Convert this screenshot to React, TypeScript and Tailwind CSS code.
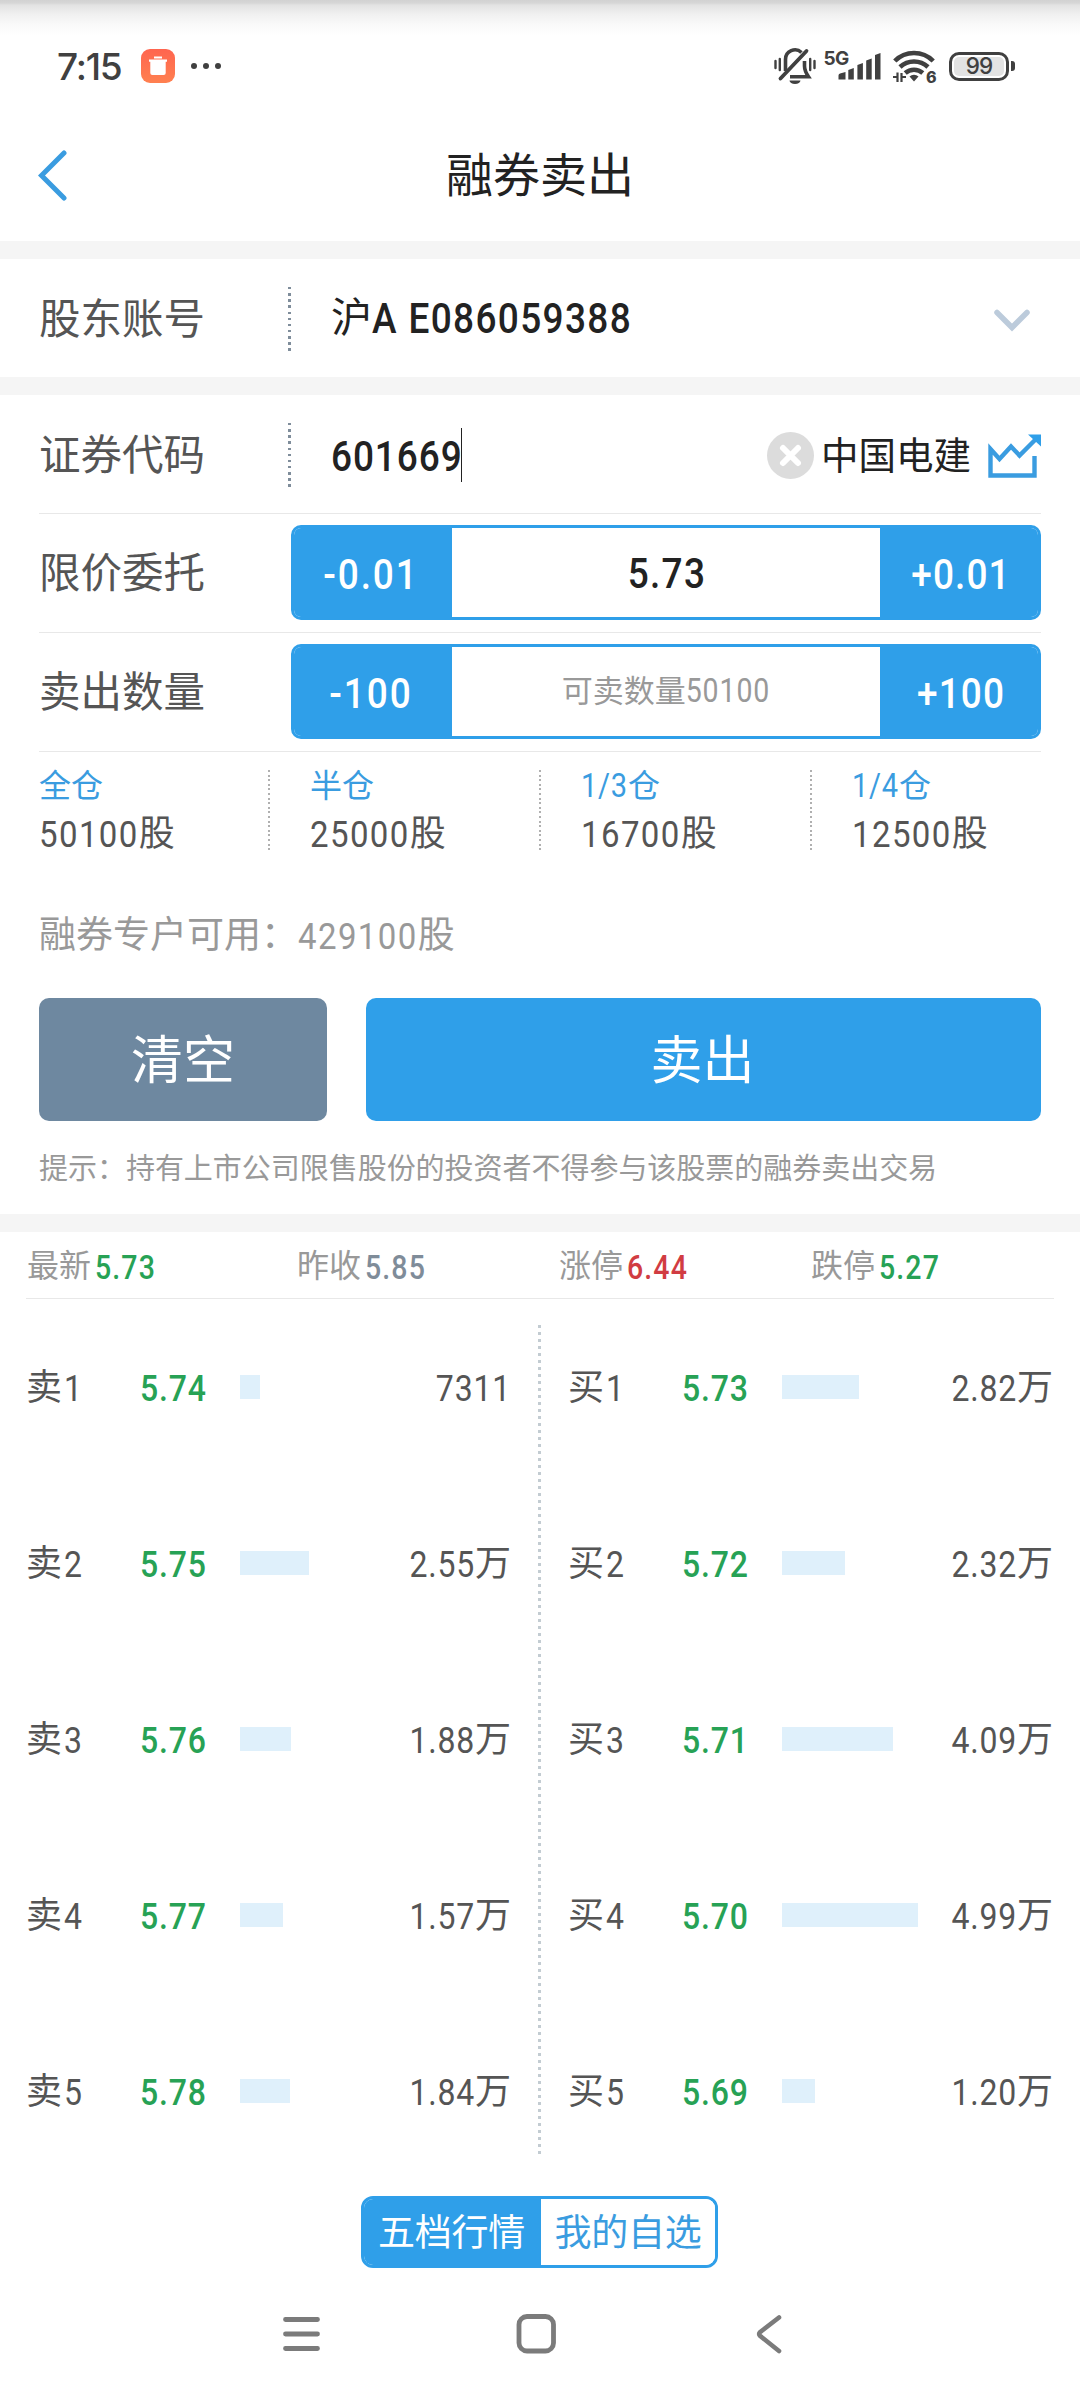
import type { ReactNode } from 'react'
import clsx from 'clsx'

interface Quote {
  label: string
  index: number
  price: string
  volume: number
}

const asks: Quote[] = [
  { label: '卖', index: 1, price: '5.74', volume: 7311 },
  { label: '卖', index: 2, price: '5.75', volume: 25500 },
  { label: '卖', index: 3, price: '5.76', volume: 18800 },
  { label: '卖', index: 4, price: '5.77', volume: 15700 },
  { label: '卖', index: 5, price: '5.78', volume: 18400 },
]

const bids: Quote[] = [
  { label: '买', index: 1, price: '5.73', volume: 28200 },
  { label: '买', index: 2, price: '5.72', volume: 23200 },
  { label: '买', index: 3, price: '5.71', volume: 40900 },
  { label: '买', index: 4, price: '5.70', volume: 49900 },
  { label: '买', index: 5, price: '5.69', volume: 12000 },
]

const positions = [
  { part: '全', amount: '50100' },
  { part: '半', amount: '25000' },
  { part: '1/3', amount: '16700' },
  { part: '1/4', amount: '12500' },
]

const stats = [
  { label: '最新', value: '5.73', width: 'w-[270px]', color: 'text-[#27a255]' },
  { label: '昨收', value: '5.85', width: 'w-[262px]', color: 'text-[#7f8c99]' },
  { label: '涨停', value: '6.44', width: 'w-[252px]', color: 'text-[#d13c42]' },
  { label: '跌停', value: '5.27', width: 'w-[200px]', color: 'text-[#27a255]' },
]

const MAX_VOLUME = 49900

// Tall, narrow figures
const Num = ({ className, children }: { className: string; children: ReactNode }) => (
  <span className={clsx('inline-block -translate-y-px scale-y-[1.14] leading-none whitespace-pre', className)}>
    {children}
  </span>
)

const Volume = ({ value }: { value: number }) => (
  <span className="ml-auto">
    <Num className="text-[32px] tracking-[0.8px]">{value >= 10000 ? (value / 10000).toFixed(2) : value}</Num>
    {value >= 10000 && '万'}
  </span>
)

const StatusBar = () => (
  <div className="flex h-[132px] items-center justify-between bg-[linear-gradient(#d2d2d2_0px,#d6d6d6_3px,#e2e2e2_5px,#f0f0f0_14px,#fafafa_25px,#ffffff_35px)] pr-[65px] pl-[57px] text-[#404040]">
    <div className="flex items-center">
      <span className="w-[84px] font-['Inter'] text-[37px] leading-none font-medium tracking-[-1.2px]">7:15</span>
      <svg width="34" height="34" viewBox="0 0 34 34">
        <defs>
          <linearGradient id="trash" x1="0" y1="0" x2="0" y2="1">
            <stop offset="0" stopColor="#ff654f" />
            <stop offset="1" stopColor="#ff8050" />
          </linearGradient>
        </defs>
        <rect width="34" height="34" rx="9" fill="url(#trash)" />
        <path d="M13 7.500h8v2h-8zM8 10.500h18v2.200h-1.300V24a2 2 0 0 1-2 2H11.300a2 2 0 0 1-2-2V12.700H8z" fill="#fff" />
      </svg>
      <svg className="ml-4" width="30" height="6" viewBox="0 0 30 6" fill="currentColor">
        <circle cx="3" cy="3" r="3" />
        <circle cx="15" cy="3" r="3" />
        <circle cx="27" cy="3" r="3" />
      </svg>
    </div>
    <div className="flex items-center">
      {/* muted bell */}
      <svg width="42" height="38" viewBox="0 0 42 38" fill="none" stroke="currentColor">
        <path d="M1.500 14v7M5.800 12v11M40.500 14v7M36.200 12v11" strokeWidth="2.400" strokeLinecap="round" />
        <path d="M11.500 24V12.500a9.500 9.500 0 0 1 16-7M30.500 14v5c0 4 1.500 7 4 10.800H16" strokeWidth="3.600" />
        <path d="M32.500 4L6.500 31.500" strokeWidth="3.800" strokeLinecap="round" />
        <path d="M15.500 33.500h11a5.500 3.500 0 0 1-11 0z" fill="currentColor" stroke="none" />
      </svg>
      {/* signal */}
      <svg className="ml-1 overflow-visible" width="62" height="38" viewBox="-4 0 62 38" fill="currentColor">
        <text x="-0.500" y="17.500" fontFamily="Inter" fontSize="19" fontWeight="700" letterSpacing="-0.600">5G</text>
        <path d="M14.500 28.500q0-1.500 1.500-2l5.500-1.500v7.500h-7zM24.300 23l5.500-2v11.500h-5.500zM33.400 18l5.500-2v16.500h-5.500zM42.200 13.500l5.500-2v21h-5.500zM51 8l5.500-2v26.500H51z" />
      </svg>
      {/* wifi */}
      <svg className="ml-[10px]" width="45" height="38" viewBox="0 0 45 38" fill="none" stroke="currentColor" strokeWidth="4.600">
        <path d="M2.800 14a27 27 0 0 1 38.400 0" />
        <path d="M8 20a20.500 20.500 0 0 1 28 0" />
        <path d="M13.200 26a13.500 13.500 0 0 1 17.600 0" />
        <path d="M17.500 29.500a6.500 6.500 0 0 1 9 0L22 34.500z" fill="currentColor" stroke="none" />
        <path d="M1 30h4.500V35M5.500 25.500V35M9.500 26v9M9.500 30h4.500" strokeWidth="2.200" />
        <text x="34" y="35.500" fontFamily="Inter" fontSize="16" fontWeight="800" fill="currentColor" stroke="none">6</text>
      </svg>
      {/* battery */}
      <div className="ml-[12px] flex items-center gap-0.5">
        <div className="flex h-[29px] w-[60px] rounded-[10px] border-3 border-[#404040] p-[2px]">
          <div className="flex flex-1 items-center justify-center rounded-[5px] bg-[#e3e3e3] font-['Inter'] text-[22.5px] leading-none font-medium tracking-[-0.8px]">
            99
          </div>
        </div>
        <div className="h-2.5 w-[4px] rounded-r-[3px] bg-[#404040]" />
      </div>
    </div>
  </div>
)

const Header = () => (
  <header className="flex h-[109px] items-center pb-[23px]">
    <div className="w-1/3 pl-[38px]">
      <svg width="30" height="52" viewBox="0 0 30 52" fill="none" stroke="#3a9ce0" strokeWidth="5" strokeLinecap="round">
        <path d="M26 4L3.500 26.500L26 49" />
      </svg>
    </div>
    <h1 className="w-1/3 pt-px text-center text-[47px] leading-none text-[#222]">融券卖出</h1>
  </header>
)

const Band = () => <div className="h-[18px] bg-[#f5f5f5]" />

const DottedDivider = () => (
  <div className="mt-0.5 h-[64px] w-[3px] bg-[repeating-linear-gradient(#7f8d9b_0px,#7f8d9b_2.400px,transparent_2.400px,transparent_6.150px)]" />
)

const Label = ({ children }: { children: ReactNode }) => (
  <div className="w-[249px] shrink-0 pt-[3px] text-[41.5px] leading-none text-[#555]">{children}</div>
)

interface StepperProps {
  step: string
  children: ReactNode
}

const Stepper = ({ step, children }: StepperProps) => (
  <div className="ml-[3px] flex h-[95px] w-[750px] overflow-hidden rounded-[10px] border-[3px] border-[#2f9fe9] bg-white">
    <button className="w-[158px] bg-[#2f9fe9] pt-[6px] pr-1 text-white">
      <Num className="text-[37px] font-medium tracking-[1.9px]">-{step}</Num>
    </button>
    <div className="flex flex-1 items-center justify-center">{children}</div>
    <button className="w-[158px] bg-[#2f9fe9] pt-[6px] pl-1 text-white">
      <Num className="text-[37px] font-medium tracking-[1.1px]">+{step}</Num>
    </button>
  </div>
)

const OrderForm = () => (
  <section className="h-[819px] px-[39px]">
    <div className="flex h-[119px] items-center border-b border-[#e8e8e8]">
      <Label>证券代码</Label>
      <DottedDivider />
      <div className="ml-[40px] flex flex-1 items-center pt-[2px]">
        <Num className="pt-[5px] text-[37px] font-medium tracking-[0.9px] text-[#222]">601669</Num>
        <span className="-ml-0.5 h-[54px] w-px bg-[#222]" />
      </div>
      <svg className="mt-[3px]" width="47" height="47" viewBox="0 0 47 47">
        <circle cx="23.500" cy="23.500" r="23.500" fill="#dcdcdc" />
        <path d="M16 16L31 31M31 16L16 31" stroke="#fff" strokeWidth="6" strokeLinecap="round" />
      </svg>
      <span className="w-[174px] pt-[5px] pl-[7px] text-[37.5px] leading-none text-[#222]">中国电建</span>
      <svg className="mt-[3px]" width="53" height="46" viewBox="0 0 53 46" fill="none">
        <path d="M46.500 23v19.500H2.500V16l9 10L23 13.500L31.500 22.500L47 7" stroke="#3a9ce0" strokeWidth="4.400" />
        <path d="M40 1.500h13v12z" fill="#2f9fe9" />
      </svg>
    </div>

    <div className="flex h-[119px] items-center border-b border-[#e8e8e8] pb-px">
      <Label>限价委托</Label>
      <Stepper step="0.01">
        <Num className="pt-[3px] pl-0.5 text-[37px] font-medium tracking-[1.3px] text-[#222]">5.73</Num>
      </Stepper>
    </div>
    <div className="flex h-[119px] items-center border-b border-[#e8e8e8] pb-px">
      <Label>卖出数量</Label>
      <Stepper step="100">
        <span className="pt-px text-[31px] leading-none text-[#999]">
          可卖数量<Num className="text-[28.5px] tracking-[0.9px]">50100</Num>
        </span>
      </Stepper>
    </div>

    <div className="flex h-[118px] pt-[18px]">
      {positions.map((position, index) => (
        <div key={position.part} className="flex h-[80px] w-[271px] shrink-0 justify-between">
          <div className="flex flex-col gap-[14px]">
            <span className="h-[32px] text-[32px] leading-none text-[#3a9ce0]">
              {position.part.length > 1 ? <Num className="text-[29px] tracking-[0.8px]">{position.part}</Num> : position.part}仓
            </span>
            <span className="h-[36px] text-[36px] leading-none text-[#555]">
              <Num className="text-[33px] tracking-[1.4px]">{position.amount}</Num>股
            </span>
          </div>
          {index < 3 && (
            <div className="mr-[40px] w-[2px] bg-[repeating-linear-gradient(#b0b0b0_0px,#b0b0b0_2px,transparent_2px,transparent_4.600px)]" />
          )}
        </div>
      ))}
    </div>

    <p className="h-[128px] pt-[47px] text-[37px] leading-none text-[#999]">
      融券专户可用：<Num className="text-[33px] tracking-[1.4px]">429100</Num>股
    </p>

    <div className="flex h-[123px] gap-[39px]">
      <button className="w-[288px] rounded-[10px] bg-[#6e88a0] pt-[5px] text-[52px] leading-none text-white">清空</button>
      <button className="flex-1 rounded-[10px] bg-[#2f9fe9] pt-[5px] pr-0.5 text-[52px] leading-none text-white">卖出</button>
    </div>
    <p className="pt-[34px] text-[29px] leading-none tracking-[-0.030px] whitespace-nowrap text-[#999]">
      提示：持有上市公司限售股份的投资者不得参与该股票的融券卖出交易
    </p>
  </section>
)

const QuoteList = ({ quotes }: { quotes: Quote[] }) => (
  <div className="w-[485px]">
    {quotes.map((quote) => (
      <div key={quote.index} className="flex h-[176px] items-center text-[36px] leading-none text-[#555]">
        <span className="w-[114px]">
          {quote.label}
          <Num className="pl-0.5 text-[32px]">{quote.index}</Num>
        </span>
        <Num className="w-[100px] pt-px text-[32px] font-medium tracking-[0.8px] text-[#27a255]">{quote.price}</Num>
        <div className="-mt-0.5 h-[24px] bg-[#dff0fb]" style={{ width: (quote.volume / MAX_VOLUME) * 136 }} />
        <Volume value={quote.volume} />
      </div>
    ))}
  </div>
)

const Market = () => (
  <section className="h-[964px] px-[26px]">
    <div className="flex h-[67px] items-center border-b border-[#e8e8e8] pl-px">
      {stats.map((stat) => (
        <div key={stat.label} className={clsx('flex items-center gap-1 text-[32px] leading-none', stat.width)}>
          <span className="pt-px text-[#999]">{stat.label}</span>
          <Num className={clsx('pt-[8px] text-[28.5px] font-medium tracking-[1.1px]', stat.color)}>{stat.value}</Num>
        </div>
      ))}
    </div>
    <div className="flex gap-[27px] pt-px">
      <QuoteList quotes={asks} />
      <div className="mt-[25px] h-[829px] w-[3px] bg-[repeating-linear-gradient(#c3ccd2_0px,#c3ccd2_3px,transparent_3px,transparent_7px)]" />
      <QuoteList quotes={bids} />
    </div>
  </section>
)

const Tabs = () => (
  <div className="ml-[361px] flex h-[72px] w-[357px] overflow-hidden rounded-[12px] border-[3px] border-[#2f9fe9] text-[37px] leading-none">
    <button className="w-[177px] bg-[#2f9fe9] pt-[2px] pr-0.5 tracking-[-0.2px] text-white">五档行情</button>
    <button className="flex-1 bg-white pt-[2px] tracking-[-0.2px] text-[#3a9ce0]">我的自选</button>
  </div>
)

const NavBar = () => (
  <nav className="flex h-[132px] pt-[45px] pl-[282px]">
    <svg width="38" height="42" viewBox="0 0 38 42" fill="none" stroke="#7b7b7b" strokeWidth="4.800" strokeLinecap="round">
      <path d="M3.500 6.500h32M3.500 21h32M3.500 35.500h32" />
    </svg>
    <svg className="ml-[196px]" width="40" height="42" viewBox="0 0 40 42" fill="none" stroke="#7b7b7b" strokeWidth="4.800">
      <rect x="3" y="3.500" width="34.500" height="34.500" rx="8" />
    </svg>
    <svg className="ml-[199px]" width="28" height="42" viewBox="0 0 28 42" fill="none" stroke="#7b7b7b" strokeWidth="4.600" strokeLinecap="round">
      <path d="M24 4.500L5 19.200Q3.200 21 5 22.800L24 38" />
    </svg>
  </nav>
)

export default function App() {
  return (
    <div className="h-[2400px] w-[1080px] overflow-hidden bg-white font-['Roboto','Noto_Sans_CJK_SC',sans-serif]">
      <StatusBar />
      <Header />
      <Band />
      <section className="flex h-[118px] items-center px-[39px]">
        <Label>股东账号</Label>
        <DottedDivider />
        <span className="ml-[40px] flex-1 text-[41px] leading-none text-[#222]">
          沪<Num className="text-[37px] font-medium tracking-[1.35px]">A E086059388</Num>
        </span>
        <svg className="mt-[3px] mr-2.5" width="38" height="24" viewBox="0 0 38 24" fill="none" stroke="#bccbdb" strokeWidth="5.500" strokeLinecap="round">
          <path d="M4 4.500L19 19.500L34 4.500" />
        </svg>
      </section>
      <Band />
      <OrderForm />
      <Band />
      <Market />
      <Tabs />
      <NavBar />
    </div>
  )
}
